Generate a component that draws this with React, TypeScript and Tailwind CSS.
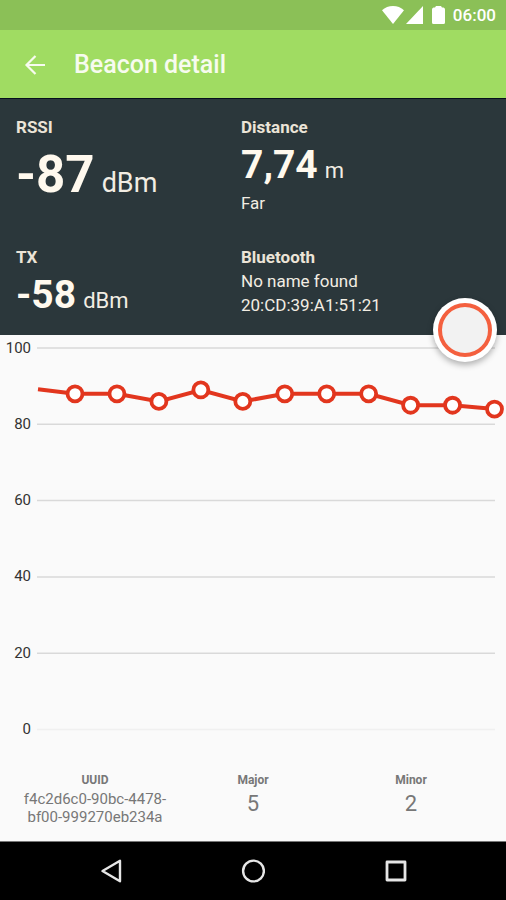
import React from "react";

const TOP = 13;
const STEP = 76.3;
const AXIS = [100, 80, 60, 40, 20, 0];
const READINGS = [88, 88, 86, 89, 86, 88, 88, 88, 85, 85, 84];

const yFor = (v: number) => TOP + ((100 - v) / 20) * STEP;
const POINTS = READINGS.map((v, i) => ({ x: 75 + i * 41.95, y: yFor(v) }));

function StatusBar() {
  return (
    <div className="flex h-[30px] items-center justify-end bg-[#8bc057] pr-[10px] text-white">
      <svg className="h-[18px] w-[22px]" viewBox="0 0 22 18" fill="currentColor" aria-hidden="true">
        <path d="M0 4.2C3 1.5 6.800 0 11 0s8 1.500 11 4.200L11 18z" />
      </svg>
      <svg className="ml-[2px] h-[18px] w-[17px]" viewBox="0 0 17 18" fill="currentColor" aria-hidden="true">
        <path d="M17 0v18H0z" />
      </svg>
      <svg className="ml-[9px] h-[18px] w-[13px]" viewBox="0 0 13 18" fill="currentColor" aria-hidden="true">
        <path d="M4 0h5l1 1.500h1.500Q13 2 13 3.500v13q0 1.500-1.500 1.500h-10Q0 18 0 16.500v-13Q0 2 1.500 1.500H3z" />
      </svg>
      <span className="ml-2 text-[17px] leading-6 font-medium">06:00</span>
    </div>
  );
}

function AppBar() {
  return (
    <header className="flex h-[68px] items-center bg-[#a0dc62] pt-[2px] pl-6 text-[#f7fbef]">
      <button type="button" aria-label="Back" className="flex size-[22px] items-center justify-center">
        <svg className="size-[22px]" viewBox="0 0 22 22" fill="none" stroke="currentColor" strokeWidth="2.2" aria-hidden="true">
          <path d="M21 11H3M11.500 2L2.500 11l9 9" />
        </svg>
      </button>
      <h1 className="ml-7 text-[25px] leading-8 font-medium">Beacon detail</h1>
    </header>
  );
}

function Label({ children }: { children: React.ReactNode }) {
  return <h2 className="text-[17px] leading-6 font-bold text-[#ebe4d7]">{children}</h2>;
}

function Reading({ value, unit, large = false }: { value: string; unit: string; large?: boolean }) {
  return (
    <p className="flex items-baseline gap-[7px]">
      <b className={large ? "text-[51px] leading-[72px] text-[#fff9ee]" : "text-[39px] leading-[52px] text-[#fff9ee]"}>
        {value}
      </b>
      <span className={large ? "text-[27px] leading-none" : "text-[22px] leading-none"}>{unit}</span>
    </p>
  );
}

function Summary() {
  return (
    <section className="relative border-t border-[#06101c] bg-[#2b373b] px-4 pt-4 pb-[14px] text-[#f2ede3]">
      <div className="grid grid-cols-[225fr_249fr] gap-y-[30px]">
        <div>
          <Label>RSSI</Label>
          <Reading value="-87" unit="dBm" large />
        </div>
        <div>
          <Label>Distance</Label>
          <Reading value="7,74" unit="m" />
          <p className="text-[17px] leading-6">Far</p>
        </div>
        <div>
          <Label>TX</Label>
          <Reading value="-58" unit="dBm" />
        </div>
        <div>
          <Label>Bluetooth</Label>
          <p className="text-[17px] leading-6">No name found</p>
          <p className="text-[17px] leading-6">20:CD:39:A1:51:21</p>
        </div>
      </div>
      <button
        type="button"
        aria-label="Record"
        className="absolute right-[9px] -bottom-[27px] flex size-16 items-center justify-center rounded-full bg-white shadow-[0_3px_6px_rgba(0,0,0,0.3)]"
      >
        <span className="size-[54px] rounded-full border-4 border-[#f4603f] bg-[#f2f2f2]" />
      </button>
    </section>
  );
}

function Chart() {
  const line = [`38,${yFor(89.2)}`, ...POINTS.map((p) => `${p.x},${p.y}`)].join(" ");
  return (
    <svg className="w-full" viewBox="0 0 506 430" role="img" aria-label="Signal strength over time">
      {AXIS.map((v) => (
        <g key={v}>
          <line x1="37" x2="495" y1={yFor(v)} y2={yFor(v)} stroke={v === 0 ? "#f0f0f0" : "#d9d9d9"} strokeWidth="1.5" />
          <text x="31" y={yFor(v) + 4.500} textAnchor="end" fontSize="15" fill="#333333">
            {v}
          </text>
        </g>
      ))}
      <polyline points={line} fill="none" stroke="#e2361e" strokeWidth="4" />
      {POINTS.map((p) => (
        <circle key={p.x} cx={p.x} cy={p.y} r="7.5" fill="#ffffff" stroke="#e2361e" strokeWidth="3.800" />
      ))}
    </svg>
  );
}

function Identifiers() {
  return (
    <dl className="grid grid-cols-3 px-4 pt-[7px] pb-[14px] text-center text-[#777777]">
      <div>
        <dt className="text-xs font-bold">UUID</dt>
        <dd className="mt-[2px] text-[15px] leading-[18px]">
          f4c2d6c0-90bc-4478-
          <br />
          bf00-999270eb234a
        </dd>
      </div>
      <div>
        <dt className="text-xs font-bold">Major</dt>
        <dd className="text-[22px] leading-8">5</dd>
      </div>
      <div>
        <dt className="text-xs font-bold">Minor</dt>
        <dd className="text-[22px] leading-8">2</dd>
      </div>
    </dl>
  );
}

function NavBar() {
  const button = "flex size-12 items-center justify-center";
  return (
    <nav className="mt-auto flex h-[59px] items-center justify-center gap-[94px] border-t border-[#777777] bg-black text-[#e6e6e6]">
      <button type="button" aria-label="Back" className={button}>
        <svg className="size-6" viewBox="0 0 24 24" fill="none" stroke="currentColor" strokeWidth="2.4" strokeLinejoin="round" aria-hidden="true">
          <path d="M21 1.800v20.400L3.500 12z" />
        </svg>
      </button>
      <button type="button" aria-label="Home" className={button}>
        <svg className="size-6" viewBox="0 0 24 24" fill="none" stroke="currentColor" strokeWidth="2.4" aria-hidden="true">
          <circle cx="12.500" cy="12" r="10.400" />
        </svg>
      </button>
      <button type="button" aria-label="Recent apps" className={button}>
        <svg className="size-6" viewBox="0 0 24 24" fill="none" stroke="currentColor" strokeWidth="2.8" strokeLinejoin="round" aria-hidden="true">
          <rect x="4" y="3" width="18" height="18" />
        </svg>
      </button>
    </nav>
  );
}

export default function App() {
  return (
    <div className="flex min-h-screen flex-col bg-[#fafafa] font-['Roboto',sans-serif]">
      <StatusBar />
      <AppBar />
      <Summary />
      <Chart />
      <Identifiers />
      <NavBar />
    </div>
  );
}
